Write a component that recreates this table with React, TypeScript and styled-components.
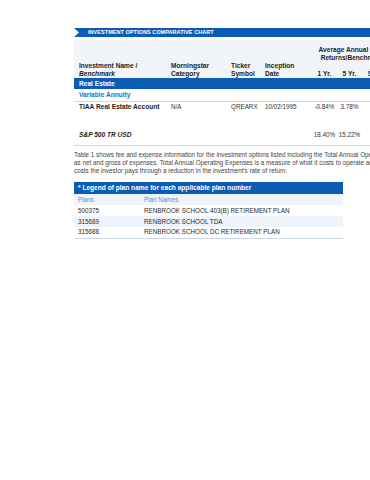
import styled, { createGlobalStyle } from "styled-components";

const GlobalStyle = createGlobalStyle`
  html, body {
    margin: 0;
    padding: 0;
    overflow: hidden;
    background: #ffffff;
    font-family: "Liberation Sans", Arial, sans-serif;
  }
`;

const BLUE = "#0b5cb4";
const LINE = "#c9d6e6";
const LIGHT = "#eff4fa";

const Page = styled.div`
  width: 440px;
  margin-left: 74px;
  padding-top: 28px;
`;

const TitleBar = styled.div`
  height: 9px;
  line-height: 9.5px;
  padding-left: 14px;
  background: ${BLUE};
  color: #fff;
  font-size: 5.5px;
  font-weight: bold;
  letter-spacing: 0.05px;
  white-space: nowrap;
  clip-path: polygon(0 0, 100% 0, 100% 100%, 0 100%, 5px 50%);
`;

const Col = styled.col<{ $w: number }>`
  width: ${(p) => p.$w}px;
`;

const Table = styled.table`
  margin-top: 3px;
  border-collapse: collapse;
  table-layout: fixed;
  width: 348px;
  font-size: 6.6px;
  color: #222;
`;

const HeadRow = styled.tr`
  background: #f1f5fa;
`;

const Th = styled.th<{ $center?: boolean; $h?: number; $pl?: number }>`
  ${(p) => (p.$h ? `height: ${p.$h}px;` : "")}
  padding: 0 0 0 ${(p) => (p.$pl ?? 4)}px;
  text-align: ${(p) => (p.$center ? "center" : "left")};
  vertical-align: bottom;
  line-height: 8px;
  font-weight: bold;
  white-space: nowrap;
  overflow: hidden;
`;

const GroupTh = styled.th`
  height: 22px;
  padding: 0 30px 0 0;
  text-align: center;
  vertical-align: bottom;
  line-height: 8px;
  font-weight: bold;
  white-space: nowrap;
`;

const SectionCell = styled.td`
  height: 11px;
  padding: 0 0 0 5px;
  background: ${BLUE};
  color: #fff;
  font-weight: bold;
  line-height: 11px;
`;

const SubSectionCell = styled.td`
  height: 12px;
  padding: 0 0 0 5px;
  color: #2f6db5;
  font-weight: bold;
  line-height: 8px;
  border-bottom: 1px solid ${LINE};
`;

const Row = styled.tr<{ $h: number; $line?: boolean }>`
  height: ${(p) => p.$h}px;
  ${(p) => (p.$line ? `border-bottom: 1px solid ${LINE};` : "")}
`;

const Td = styled.td<{ $center?: boolean; $bold?: boolean; $italic?: boolean; $pl?: number }>`
  padding: 0 0 0 ${(p) => (p.$center ? 0 : p.$pl ?? 4)}px;
  text-align: ${(p) => (p.$center ? "center" : "left")};
  font-weight: ${(p) => (p.$bold ? "bold" : "normal")};
  font-style: ${(p) => (p.$italic ? "italic" : "normal")};
  font-size: ${(p) => (p.$bold ? 6.6 : 6.3)}px;
  color: ${(p) => (p.$bold ? "#1d1d1d" : "#333")};
  line-height: 8px;
  white-space: nowrap;
  overflow: hidden;
`;

const Note = styled.p`
  margin: 5px 0 0;
  font-size: 6.3px;
  line-height: 8px;
  color: #444;
  white-space: nowrap;
`;

const Legend = styled.table`
  margin-top: 7px;
  width: 269px;
  border-collapse: collapse;
  table-layout: fixed;
  font-size: 6.3px;
  color: #333;
  border-bottom: 1px solid ${LINE};
`;

const LegendHead = styled.td`
  height: 12px;
  padding: 0 0 0 4px;
  background: ${BLUE};
  color: #fff;
  font-weight: bold;
  font-size: 6.6px;
  line-height: 12px;
`;

const LegendRow = styled.tr<{ $alt?: boolean; $label?: boolean }>`
  height: 11px;
  background: ${(p) => (p.$alt ? LIGHT : "#fff")};
  color: ${(p) => (p.$label ? "#5b8fd0" : "#2a2a2a")};
`;

const LegendCell = styled.td`
  padding: 0 0 0 4px;
  line-height: 8px;
  white-space: nowrap;
`;

const plans = [
  { id: "500375", name: "RENBROOK SCHOOL 403(B) RETIREMENT PLAN" },
  { id: "315689", name: "RENBROOK SCHOOL TDA" },
  { id: "315688", name: "RENBROOK SCHOOL DC RETIREMENT PLAN" },
];

const columns = [93, 60, 34, 51, 25, 25, 60];

export default function App() {
  return (
    <>
      <GlobalStyle />
      <Page>
        <TitleBar>INVESTMENT OPTIONS COMPARATIVE CHART</TitleBar>
        <Table>
          <colgroup>
            {columns.map((w, i) => (
              <Col key={i} $w={w} />
            ))}
          </colgroup>
          <thead>
            <HeadRow>
              <Th rowSpan={2} $pl={5}>
                Investment Name /<br />
                <i>Benchmark</i>
              </Th>
              <Th rowSpan={2}>
                Morningstar
                <br />
                Category
              </Th>
              <Th rowSpan={2}>
                Ticker
                <br />
                Symbol
              </Th>
              <Th rowSpan={2}>
                Inception
                <br />
                Date
              </Th>
              <GroupTh colSpan={3}>
                Average Annual Total
                <br />
                Returns/Benchmark
              </GroupTh>
            </HeadRow>
            <HeadRow>
              <Th $center $pl={0} $h={16}>
                1 Yr.
              </Th>
              <Th $center $pl={0}>
                5 Yr.
              </Th>
              <Th $center $pl={0}>
                Since Inception
              </Th>
            </HeadRow>
          </thead>
          <tbody>
            <tr>
              <SectionCell colSpan={7}>Real Estate</SectionCell>
            </tr>
            <tr>
              <SubSectionCell colSpan={7}>Variable Annuity</SubSectionCell>
            </tr>
            <Row $h={10}>
              <Td $bold $pl={5}>TIAA Real Estate Account</Td>
              <Td>N/A</Td>
              <Td>QREARX</Td>
              <Td>10/02/1995</Td>
              <Td $center>-0.84%</Td>
              <Td $center>3.78%</Td>
              <Td $center>6.05%</Td>
            </Row>
            <Row $h={14}>
              <Td colSpan={7} />
            </Row>
            <Row $h={20} $line>
              <Td $bold $italic $pl={5}>S&amp;P 500 TR USD</Td>
              <Td />
              <Td />
              <Td />
              <Td $center>18.40%</Td>
              <Td $center>15.22%</Td>
              <Td $center>–</Td>
            </Row>
          </tbody>
        </Table>
        <Note>
          Table 1 shows fee and expense information for the investment options listed including the Total Annual Operating Expenses of the options expressed both
          <br />
          as net and gross of expenses. Total Annual Operating Expenses is a measure of what it costs to operate an investment option, and these are the
          <br />
          costs the investor pays through a reduction in the investment's rate of return.
        </Note>
        <Legend>
          <colgroup>
            <Col $w={66} />
            <Col $w={203} />
          </colgroup>
          <tbody>
            <tr>
              <LegendHead colSpan={2}>* Legend of plan name for each applicable plan number</LegendHead>
            </tr>
            <LegendRow $alt $label>
              <LegendCell>Plans</LegendCell>
              <LegendCell>Plan Names</LegendCell>
            </LegendRow>
            {plans.map((p, i) => (
              <LegendRow key={p.id} $alt={i % 2 === 1}>
                <LegendCell>{p.id}</LegendCell>
                <LegendCell>{p.name}</LegendCell>
              </LegendRow>
            ))}
          </tbody>
        </Legend>
      </Page>
    </>
  );
}
